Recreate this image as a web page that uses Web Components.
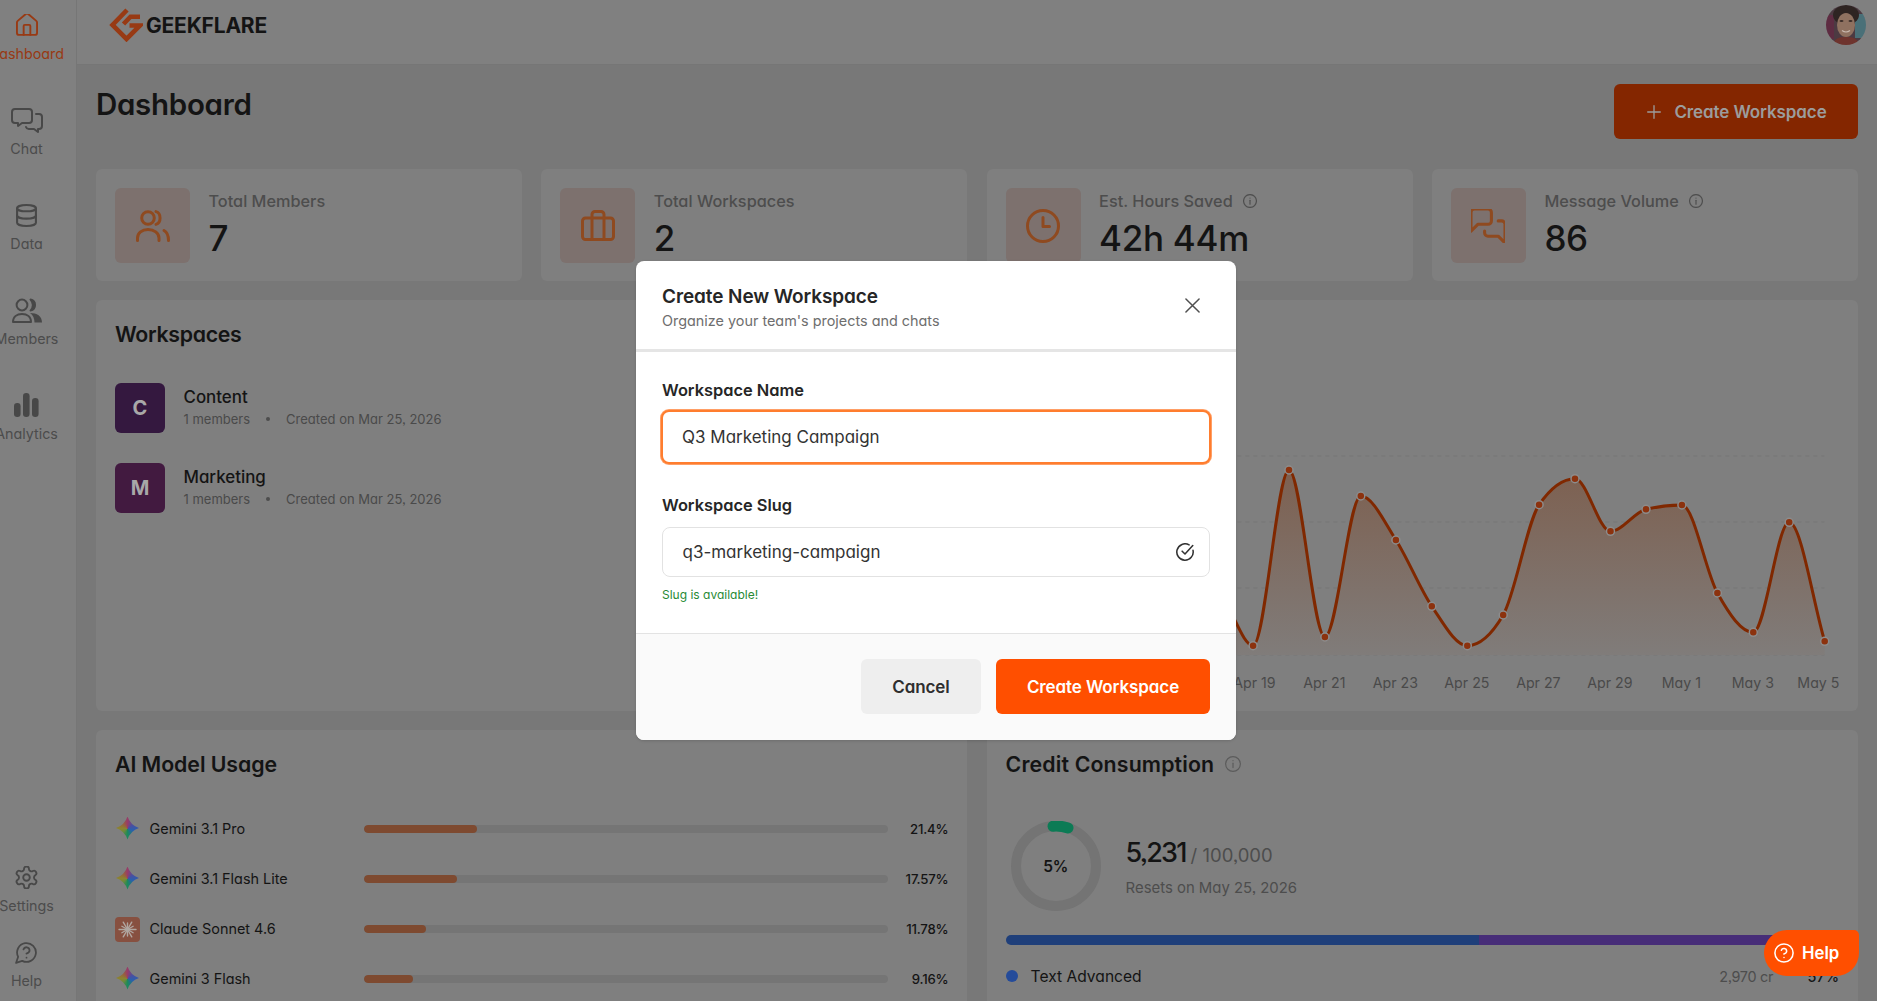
<!DOCTYPE html>
<html lang="en"><head><meta charset="utf-8"><title>Geekflare Dashboard</title>
<style>
html,body{margin:0;padding:0;height:1001px;overflow:hidden;background:#787878}
body{font-family:Inter,"Noto Sans",sans-serif;font-feature-settings:"cv11","ss03";color:#141414}
</style></head><body>
<gf-app></gf-app>
<script>
const ICONS={
home:['3 2.3 18 19.7','<path d="M15 21v-8a1 1 0 0 0-1-1h-4a1 1 0 0 0-1 1v8"/><path d="M3 10a2 2 0 0 1 .709-1.528l7-5.999a2 2 0 0 1 2.582 0l7 5.999A2 2 0 0 1 21 10v9a2 2 0 0 1-2 2H5a2 2 0 0 1-2-2z"/>'],
chat:['0 0 32 25','<path d="M4 1H18a3 3 0 0 1 3 3V12a3 3 0 0 1-3 3H11L7 18V15H4a3 3 0 0 1-3-3V4a3 3 0 0 1 3-3Z"/><path d="M25 6h3a3 3 0 0 1 3 3v9a3 3 0 0 1-3 3h-1v3l-4-3h-5a3 3 0 0 1-3-2"/>'],
data:['2 1 20 22','<ellipse cx="12" cy="5" rx="9" ry="3"/><path d="M3 5V19A9 3 0 0 0 21 19V5"/><path d="M3 12A9 3 0 0 0 21 12"/>'],
members:['0 0 32 25','<circle cx="11" cy="7" r="5.4"/><path d="M19.5 1.6A5.6 5.6 0 0 1 19.5 12.6A7.6 7.6 0 0 0 19.5 1.6Z" fill="currentColor"/><path d="M2 24C2 18.5 6 16 11 16C16 16 20 18.5 20 24Z"/><path d="M19 15C26 15 31 18 31 24.6H23.5C23.5 20.5 22 17 19 15Z" fill="currentColor" stroke="none"/>'],
bars:['0 0 25 24','<rect x="0" y="10" width="6.6" height="14" rx="3.2" fill="currentColor" stroke="none"/><rect x="9" y="0" width="6.6" height="24" rx="3.2" fill="currentColor" stroke="none"/><rect x="18" y="5" width="6.6" height="19" rx="3.2" fill="currentColor" stroke="none"/>'],
settings:['1.5 1.5 21 21','<path d="M12.22 2h-.44a2 2 0 0 0-2 2v.18a2 2 0 0 1-1 1.73l-.43.25a2 2 0 0 1-2 0l-.15-.08a2 2 0 0 0-2.73.73l-.22.38a2 2 0 0 0 .73 2.73l.15.1a2 2 0 0 1 1 1.72v.51a2 2 0 0 1-1 1.74l-.15.09a2 2 0 0 0-.73 2.73l.22.38a2 2 0 0 0 2.73.73l.15-.08a2 2 0 0 1 2 0l.43.25a2 2 0 0 1 1 1.73V20a2 2 0 0 0 2 2h.44a2 2 0 0 0 2-2v-.18a2 2 0 0 1 1-1.73l.43-.25a2 2 0 0 1 2 0l.15.08a2 2 0 0 0 2.73-.73l.22-.39a2 2 0 0 0-.73-2.73l-.15-.08a2 2 0 0 1-1-1.74v-.5a2 2 0 0 1 1-1.74l.15-.09a2 2 0 0 0 .73-2.73l-.22-.38a2 2 0 0 0-2.73-.73l-.15.08a2 2 0 0 1-2 0l-.43-.25a2 2 0 0 1-1-1.73V4a2 2 0 0 0-2-2z"/><circle cx="12" cy="12" r="3"/>'],
helpbubble:['1 1 22 22','<path d="M7.9 20A9 9 0 1 0 4 16.1L2 22Z"/><path d="M9.09 9a3 3 0 0 1 5.83 1c0 2-3 3-3 3"/><path d="M12 17h.01"/>'],
users:['0 0 34 32','<circle cx="12" cy="8" r="6.3"/><path d="M20 1.6C25.4 3 25.4 13 20 14.4"/><path d="M1.5 30.5V28C1.500 23 6 19.500 12 19.500C18 19.500 23 23 23 28V30.500"/><path d="M28 20.500C30.800 22 32.500 25 32.500 30.500"/>'],
brief:['0 0 34 31','<rect x="1.500" y="8" width="31" height="21.500" rx="3"/><path d="M11 8V29.500M23 8V29.500M11 8V4.500A3 3 0 0 1 14 1.500H20A3 3 0 0 1 23 4.500V8"/>'],
clock:['0 0 34 34','<circle cx="17" cy="17" r="15.500"/><path d="M17 8.500V17.500H23.500"/>'],
msgs:['2 2 20 20','<path d="M14 9a2 2 0 0 1-2 2H6l-4 4V4a2 2 0 0 1 2-2h8a2 2 0 0 1 2 2z"/><path d="M18 9h2a2 2 0 0 1 2 2v11l-4-4h-6a2 2 0 0 1-2-2v-1"/>'],
info:['2 2 20 20','<circle cx="12" cy="12" r="9.200"/><path d="M12 16.500v-5.500"/><path d="M12 7.800h.01"/>'],
plus:['0 0 16 16','<path d="M8 .8V15.200M.8 8H15.200"/>'],
close:['0 0 16 16','<path d="M1 1L15 15M15 1L1 15"/>'],
check:['1 1 22 22','<path d="M21.801 10A10 10 0 1 1 17 3.335"/><path d="m8.500 11 3.500 3.500L21.500 4"/>'],
qcircle:['1 1 22 22','<circle cx="12" cy="12" r="10"/><path d="M9.090 9a3 3 0 0 1 5.830 1c0 2-3 3-3 3"/><path d="M12 17h.01"/>']
};
class Base extends HTMLElement{
  constructor(){super();this.attachShadow({mode:'open'})}
  render(html){this.shadowRoot.innerHTML=html}
  a(n,d=''){return this.hasAttribute(n)?this.getAttribute(n):d}
}
customElements.define('gf-icon',class extends Base{connectedCallback(){
  const [vb,body]=ICONS[this.a('name')];const w=this.a('w','24'),h=this.a('h',w),sw=this.a('sw','2');
  this.render(`<style>:host{display:inline-flex;flex:none;line-height:0}svg{display:block}</style>
  <svg xmlns="http://www.w3.org/2000/svg" viewBox="${vb}" width="${w}" height="${h}" fill="none" stroke="currentColor" stroke-width="${sw}" stroke-linecap="round" stroke-linejoin="round">${body}</svg>`);
}});
customElements.define('gf-nav-item',class extends Base{connectedCallback(){
  const on=this.hasAttribute('active');
  this.render(`<style>:host{display:flex;flex-direction:column;align-items:center;height:53.500px;color:${on?'#983a14':'#484848'}}
  .i{height:30px;display:flex;align-items:center;justify-content:center}
  .l{margin-top:4.500px;font-size:14.300px;line-height:18px;white-space:nowrap;font-weight:400;color:${on?'#983a14':'#4c4c4c'}}</style>
  <div class="i"><slot name="icon"></slot></div><div class="l"><slot></slot></div>`);
}});
customElements.define('gf-sidebar',class extends Base{connectedCallback(){
  this.render(`<style>:host{display:flex;box-sizing:border-box;width:77px;height:1001px;background:#808080;border-right:1px solid #767676}
  nav{width:53px;height:100%;box-sizing:border-box;padding:10px 0 10.500px;display:flex;flex-direction:column;justify-content:space-between}
  .g{display:flex;flex-direction:column}.top{gap:41.500px}.bot{gap:21.500px}</style>
  <nav><div class="g top">
   <gf-nav-item active><gf-icon slot="icon" name="home" w="22" h="22" sw="1.700"></gf-icon>Dashboard</gf-nav-item>
   <gf-nav-item><gf-icon slot="icon" name="chat" w="32" h="25" sw="2"></gf-icon>Chat</gf-nav-item>
   <gf-nav-item><gf-icon slot="icon" name="data" w="21" h="23" sw="2"></gf-icon>Data</gf-nav-item>
   <gf-nav-item><gf-icon slot="icon" name="members" w="32" h="25" sw="2"></gf-icon>Members</gf-nav-item>
   <gf-nav-item><gf-icon slot="icon" name="bars" w="25" h="24"></gf-icon>Analytics</gf-nav-item>
  </div><div class="g bot">
   <gf-nav-item><gf-icon slot="icon" name="settings" w="23" h="23" sw="1.700"></gf-icon>Settings</gf-nav-item>
   <gf-nav-item><gf-icon slot="icon" name="helpbubble" w="23" h="23" sw="1.700"></gf-icon>Help</gf-nav-item>
  </div></nav>`);
}});
customElements.define('gf-topbar',class extends Base{connectedCallback(){
  this.render(`<style>:host{display:flex;flex:none;box-sizing:border-box;height:65px;background:#808080;border-bottom:1px solid #767676;padding:0 11px 14px 32px;align-items:center;justify-content:space-between}
  .logo{display:flex;align-items:center;gap:3px}
  .t{font-family:Inter,sans-serif;font-feature-settings:normal;font-weight:700;font-size:21px;letter-spacing:-.2px;color:#141414;line-height:24px;margin-top:2px}</style>
  <div class="logo"><svg width="34" height="34" viewBox="109 8 34 34" fill="none" stroke="#983a14" stroke-width="4.600"><path d="M127 10L112.500 25L126.500 39L140 25.500H129.500" stroke-linejoin="miter"/><path d="M123.500 24L130.500 16.700H140"/></svg><span class="t">GEEKFLARE</span></div>
  <svg width="40" height="40" viewBox="0 0 40 40"><defs><clipPath id="c"><circle cx="20" cy="20" r="20"/></clipPath></defs><g clip-path="url(#c)"><g style="filter:blur(.6px)"><rect width="40" height="40" fill="#4c3a42"/><rect x="29" y="9" width="11" height="24" fill="#4a7078"/><rect x="0" y="10" width="8" height="24" fill="#5e2c42"/><ellipse cx="20" cy="10" rx="13" ry="10" fill="#2e2422"/><ellipse cx="20" cy="20" rx="9" ry="12" fill="#8f7160"/><ellipse cx="15.500" cy="16" rx="2" ry="1" fill="#3c2e2a"/><ellipse cx="24.500" cy="16" rx="2" ry="1" fill="#3c2e2a"/><path d="M16 25.500q4 3 8 0" stroke="#c9b8ae" stroke-width="1.200" fill="none"/><path d="M6 40q3-9 14-8q11-1 14 8z" fill="#6e342e"/></g></g></svg>`);
}});
customElements.define('gf-stat',class extends Base{connectedCallback(){
  const info=this.hasAttribute('info')?`<gf-icon name="info" w="14" sw="1.700" style="color:#4f4f4f;margin-left:10px"></gf-icon>`:'';
  this.render(`<style>:host{display:flex;box-sizing:border-box;height:112px;background:#7f7f7f;border-radius:6px;padding:19px 19px 18px;gap:18.500px}
  .tile{width:75px;height:75px;border-radius:6px;background:#7d716e;display:flex;align-items:center;justify-content:center;color:#8f4a20;flex:none}
  .col{display:flex;flex-direction:column;margin-top:1px}
  .lab{display:flex;align-items:center;font-size:16.300px;line-height:24px;font-weight:500;color:#4d4d4d}
  .val{font-size:35px;line-height:38px;margin-top:6px;font-weight:500;color:#141414;letter-spacing:-.3px}</style>
  <div class="tile"><slot name="icon"></slot></div>
  <div class="col"><div class="lab">${this.a('label')}${info}</div><div class="val">${this.a('value')}</div></div>`);
}});
customElements.define('gf-card',class extends Base{connectedCallback(){
  const info=this.hasAttribute('info')?`<gf-icon name="info" w="16" sw="1.500" style="color:#5c5c5c;margin-left:11px"></gf-icon>`:'';
  const title=this.a('title');
  this.render(`<style>:host{display:flex;flex-direction:column;box-sizing:border-box;background:#7f7f7f;border-radius:6px;padding:20px 19px 0;overflow:hidden;position:relative}
  h2{margin:0;display:flex;align-items:center;font-size:21.300px;line-height:28px;font-weight:600;color:#141414;letter-spacing:${this.a('ls','-.2px')}}</style>
  ${title?`<h2>${title}${info}</h2>`:''}<slot></slot>`);
  this.removeAttribute('title');
}});
customElements.define('gf-workspace',class extends Base{connectedCallback(){
  this.render(`<style>:host{display:flex;align-items:center;gap:18.500px;height:50px}
  .av{width:50px;height:50px;border-radius:6px;background:${this.a('color')};color:#a8a8a8;font-size:20px;font-weight:700;display:flex;align-items:center;justify-content:center;flex:none}
  .tx{margin-top:-2px}
  .n{font-size:16.900px;line-height:24px;font-weight:500;color:#141414}
  .m{display:flex;align-items:center;font-size:13px;line-height:21px;color:#4a4a4a}
  .d{width:4px;height:4px;border-radius:50%;background:#4d4d4d;margin:0 16px}</style>
  <div class="av">${this.a('letter')}</div><div class="tx"><div class="n">${this.a('name')}</div><div class="m"><span>1 members</span><span class="d"></span><span>Created on Mar 25, 2026</span></div></div>`);
}});
customElements.define('gf-model',class extends Base{connectedCallback(){
  const claude=this.a('kind')==='claude';
  const rays=Array.from({length:12},(_,i)=>{const t=i*Math.PI/6,l=i%2?6.500:8.500;return `<path d="M12.500 12.500L${(12.500+l*Math.cos(t)).toFixed(2)} ${(12.500+l*Math.sin(t)).toFixed(2)}"/>`}).join('');
  const logo=claude?`<svg width="25" height="25" viewBox="0 0 25 25"><rect width="25" height="25" rx="4" fill="#875040"/><g stroke="#b0a6a0" stroke-width="1.400" stroke-linecap="round">${rays}</g></svg>`
   :`<span class="star"></span>`;
  this.render(`<style>:host{display:grid;grid-template-columns:249px 1fr 60px;align-items:center;height:50px}
  .nm{display:flex;align-items:center;gap:9.500px;font-size:14.400px;color:#141414;font-weight:400}
  .nm span:last-child{margin-top:-2px}
  .lg{width:25px;height:25px;margin-top:0!important;display:flex;align-items:center;justify-content:center;flex:none}
  .star{width:23px;height:23px;display:block;background:conic-gradient(from 0deg,#983c68,#4a4fa0 55deg,#2a5fae 110deg,#1c8a5c 180deg,#6f8a3a 235deg,#8a8430 270deg,#98603e 320deg,#983c68);clip-path:path('M11.500 0Q14.400 8.600 23 11.500Q14.400 14.400 11.500 23Q8.600 14.400 0 11.500Q8.600 8.600 11.500 0Z')}
  .tr{height:8px;border-radius:4px;background:#757575;overflow:hidden}.fl{height:100%;border-radius:4px;background:#7e4a30;width:${this.a('fill')}px}
  .p{text-align:right;font-size:13.200px;font-weight:500;color:#141414;letter-spacing:-.2px}</style>
  <div class="nm"><span class="lg">${logo}</span><span>${this.a('name')}</span></div><div class="tr"><div class="fl"></div></div><div class="p">${this.a('pct')}</div>`);
}});
customElements.define('gf-chart',class extends Base{connectedCallback(){
  const xs=[1004,1039.600,1075.200,1110.800,1146.400,1182,1217,1252.700,1288.600,1324.500,1360.400,1395.500,1431.400,1466.900,1502.800,1538.700,1574.600,1610.100,1645.600,1681.500,1717,1752.900,1788.800,1824.300];
  const ys=[640,600,560,620,580,630,596,645.700,470,637,496,540,606.300,645.700,615,504.700,478.700,531.300,509.300,505,593,632.300,522.300,641.300];
  const n=xs.length,d=[],m=[];
  for(let i=0;i<n-1;i++)d[i]=(ys[i+1]-ys[i])/(xs[i+1]-xs[i]);
  m[0]=d[0];m[n-1]=d[n-2];
  for(let i=1;i<n-1;i++){m[i]=0;if(d[i-1]*d[i]>0){const h0=xs[i]-xs[i-1],h1=xs[i+1]-xs[i];const p=(d[i-1]*h1+d[i]*h0)/(h0+h1);m[i]=(Math.sign(d[i-1])+Math.sign(d[i]))*Math.min(Math.abs(d[i-1]),Math.abs(d[i]),.5*Math.abs(p))}}
  let p=`M${xs[0]} ${ys[0]}`;
  for(let i=0;i<n-1;i++){const h=(xs[i+1]-xs[i])/3;p+=`C${xs[i]+h} ${ys[i]+m[i]*h} ${xs[i+1]-h} ${ys[i+1]-m[i+1]*h} ${xs[i+1]} ${ys[i+1]}`}
  const labels=[['Apr 19',1254],['Apr 21',1324],['Apr 23',1395],['Apr 25',1466.500],['Apr 27',1538],['Apr 29',1609.500],['May 1',1681],['May 3',1752.500],['May 5',1818]];
  this.render(`<style>:host{display:block;position:absolute;inset:0}svg{display:block}text{font-family:Inter,sans-serif;font-feature-settings:"cv11";font-size:14.200px;fill:#4a4a4a;text-anchor:middle}</style>
  <svg width="871.400" height="411" viewBox="986.600 300 871.400 411">
  <defs><linearGradient id="g" x1="0" y1="470" x2="0" y2="655" gradientUnits="userSpaceOnUse"><stop offset="0" stop-color="#7d6050"/><stop offset="1" stop-color="#807c7a"/></linearGradient></defs>
  ${[456,522,588,655].map(y=>`<path d="M1005 ${y}H1824" stroke="#767676" stroke-dasharray="4 4" fill="none"/>`).join('')}
  <path d="${p}L1824.300 655L1004 655Z" fill="url(#g)"/>
  <path d="${p}" fill="none" stroke="#802800" stroke-width="3"/>
  ${xs.map((x,i)=>`<circle cx="${x}" cy="${ys[i]}" r="4" fill="#8c320e" stroke="#8c8c8c" stroke-width="1.500"/>`).join('')}
  ${labels.map(([t,x])=>`<text x="${x}" y="688">${t}</text>`).join('')}
  </svg>`);
}});
customElements.define('gf-credit',class extends Base{connectedCallback(){
  this.render(`<style>:host{display:block}
  .top{display:flex;align-items:center;gap:25px;margin-top:43px;padding-left:5px}
  .dn{position:relative;width:90px;height:90px;flex:none}
  .dn b{position:absolute;inset:0;display:flex;align-items:center;justify-content:center;font-size:15.500px;font-weight:600;color:#141414;letter-spacing:-.2px}
  .tc{margin-top:3px}
  .big{display:flex;align-items:baseline;gap:5px;color:#141414}
  .big b{font-size:27px;font-weight:500;letter-spacing:-1.800px;line-height:34px}
  .big span{font-size:18.500px;color:#4d4d4d}
  .r{font-size:14.900px;color:#4d4d4d;margin-top:7px;line-height:22px}
  .bar{display:flex;height:10px;border-radius:5px;overflow:hidden;margin-top:24px;margin-right:1px}
  .leg{display:flex;align-items:center;height:20px;margin-top:21px;font-size:15.600px}
  .dot{width:12px;height:12px;border-radius:50%;background:#244b9a;margin-right:13px;flex:none}
  .cr{margin-left:auto;font-size:14.400px;color:#4d4d4d;letter-spacing:-.3px}.pc{width:66px;font-size:14.400px;text-align:right;font-weight:500}</style>
  <div class="top"><div class="dn"><svg width="90" height="90" viewBox="0 0 90 90" fill="none"><circle cx="45" cy="45" r="40" stroke="#747474" stroke-width="10"/><path d="M42 5.200A40 40 0 0 1 57 6.900" stroke="#0c7b55" stroke-width="11" stroke-linecap="round"/></svg><b>5%</b></div>
  <div class="tc"><div class="big"><b>5,231</b><span>/ 100,000</span></div><div class="r">Resets on May 25, 2026</div></div></div>
  <div class="bar"><span style="width:473px;background:#1f3f7a"></span><span style="flex:1;background:#472d78"></span></div>
  <div class="leg"><span class="dot"></span><span>Text Advanced</span><span class="cr">2,970 cr</span><span class="pc">57%</span></div>`);
}});
customElements.define('gf-field',class extends Base{connectedCallback(){
  const f=this.hasAttribute('focused');
  this.render(`<style>:host{display:block}
  label{display:block;font-size:16.400px;line-height:20px;font-weight:600;color:#262626}
  .box{box-sizing:border-box;display:flex;align-items:center;justify-content:space-between;background:#fff;border-radius:8px;padding:0 ${f?'20px':'15.500px'} 0 ${f?'19px':'19.500px'};
   ${f?'height:54px;margin:10px -1px 0;border:2px solid #ff7d2e;box-shadow:0 0 0 1px #ff9f66':'height:50px;margin:12px 0 0;border:1px solid #e2e2e2'};
   font-size:17px;color:#333}
  .box gf-icon{color:#2b2b2b}</style>
  <label>${this.a('label')}</label><div class="box"><span>${this.a('value')}</span><slot></slot></div>`);
}});
customElements.define('gf-button',class extends Base{connectedCallback(){
  const k=this.a('kind','primary');
  const st={primary:'background:#ff4f00;color:#fff;width:214px;height:55px',dim:'background:#842600;color:#9c9c9c;width:244px;height:55px;padding-left:2px;box-sizing:border-box',ghost:'background:#eee;color:#2e2e2e;width:120px;height:55px'}[k];
  this.render(`<style>:host{display:inline-flex;flex:none;align-items:center;justify-content:center;gap:13px;border-radius:6px;font-size:17px;font-weight:600;letter-spacing:-.1px;white-space:nowrap;${st}}</style><slot></slot>`);
}});
customElements.define('gf-modal',class extends Base{connectedCallback(){
  this.render(`<style>:host{position:absolute;inset:0;display:flex;align-items:center;justify-content:center;padding-right:5px;box-sizing:border-box}
  .m{width:600px;height:479px;background:#fff;border-radius:8px;overflow:hidden;display:flex;flex-direction:column;box-shadow:0 1px 3px rgba(0,0,0,.15)}
  .h{box-sizing:border-box;height:91px;flex:none;border-bottom:3px solid #e5e5e5;padding:22.500px 36px 0 26px;display:flex;justify-content:space-between}
  .ti{font-size:19px;font-weight:600;line-height:26px;color:#262626;letter-spacing:-.1px}
  .su{font-size:14.400px;line-height:21px;color:#6e6e6e}
  .x{color:#4f4f4f;margin-top:14.500px}
  .b{flex:1;box-sizing:border-box;padding:28px 26px 0;display:flex;flex-direction:column}
  .hint{font-size:12px;line-height:16px;color:#278a34;margin-top:10px}
  .f{height:107px;flex:none;box-sizing:border-box;border-top:1px solid #e3e3e3;background:#fafafa;padding:25px 26px 0;display:flex;justify-content:flex-end;gap:15px}</style>
  <div class="m" role="dialog"><div class="h"><div><div class="ti">Create New Workspace</div><div class="su">Organize your team's projects and chats</div></div><gf-icon class="x" name="close" w="15" sw="1.600"></gf-icon></div>
  <div class="b"><gf-field focused label="Workspace Name" value="Q3 Marketing Campaign"></gf-field>
  <gf-field style="margin-top:31px" label="Workspace Slug" value="q3-marketing-campaign"><gf-icon name="check" w="18" sw="1.900"></gf-icon></gf-field>
  <div class="hint">Slug is available!</div></div>
  <div class="f"><gf-button kind="ghost">Cancel</gf-button><gf-button>Create Workspace</gf-button></div></div>`);
}});
customElements.define('gf-help',class extends Base{connectedCallback(){
  this.render(`<style>:host{position:absolute;left:1764px;top:930px;width:95px;height:46px;background:#ff4f00;border-radius:23px 5px 23px 23px;color:#fff;display:flex;align-items:center;gap:8px;padding-left:10px;box-sizing:border-box;font-size:16.800px;font-weight:600}</style>
  <gf-icon name="qcircle" w="20" sw="1.700"></gf-icon><span>Help</span>`);
}});
customElements.define('gf-app',class extends Base{connectedCallback(){
  this.render(`<style>:host{display:flex;position:relative;width:1877px;height:1001px;overflow:hidden;background:#787878}
  .r{flex:1;min-width:0;display:flex;flex-direction:column}
  main{flex:1;min-height:0;box-sizing:border-box;padding:19px 19px 0 19px;display:flex;flex-direction:column}
  main>*{flex:none}
  .hd{display:flex;justify-content:space-between;height:55px;margin-bottom:30px}
  h1{margin:0;font-size:29.500px;line-height:40px;font-weight:600;color:#141414;letter-spacing:-.3px}
  .st{display:grid;grid-template-columns:repeat(4,1fr);gap:19.200px}
  .two{display:grid;grid-template-columns:repeat(2,1fr);gap:19.200px;margin-top:19px}
  .ws{height:411px}.list{display:flex;flex-direction:column;gap:30px;margin-top:35px}
  .mo{margin-top:26px}.lo{height:400px}
  </style>
  <gf-sidebar></gf-sidebar>
  <div class="r"><gf-topbar></gf-topbar><main>
   <div class="hd"><h1>Dashboard</h1><gf-button kind="dim"><gf-icon name="plus" w="14" sw="1.500"></gf-icon>Create Workspace</gf-button></div>
   <div class="st">
    <gf-stat label="Total Members" value="7"><gf-icon slot="icon" name="users" w="34" h="32" sw="3"></gf-icon></gf-stat>
    <gf-stat label="Total Workspaces" value="2"><gf-icon slot="icon" name="brief" w="34" h="31" sw="3"></gf-icon></gf-stat>
    <gf-stat label="Est. Hours Saved" value="42h 44m" info><gf-icon slot="icon" name="clock" w="34" sw="3"></gf-icon></gf-stat>
    <gf-stat label="Message Volume" value="86" info><gf-icon slot="icon" name="msgs" w="34" sw="1.800"></gf-icon></gf-stat>
   </div>
   <div class="two ws">
    <gf-card title="Workspaces" ls="-.3px"><div class="list">
      <gf-workspace color="#34183f" letter="C" name="Content"></gf-workspace>
      <gf-workspace color="#421a40" letter="M" name="Marketing"></gf-workspace></div></gf-card>
    <gf-card><gf-chart></gf-chart></gf-card>
   </div>
   <div class="two lo">
    <gf-card title="AI Model Usage" ls="-.05px"><div class="mo">
      <gf-model name="Gemini 3.1 Pro" pct="21.4%" fill="113"></gf-model>
      <gf-model name="Gemini 3.1 Flash Lite" pct="17.57%" fill="93"></gf-model>
      <gf-model kind="claude" name="Claude Sonnet 4.6" pct="11.78%" fill="62"></gf-model>
      <gf-model name="Gemini 3 Flash" pct="9.16%" fill="49"></gf-model></div></gf-card>
    <gf-card title="Credit Consumption" info ls=".15px"><gf-credit></gf-credit></gf-card>
   </div>
  </main></div>
  <gf-help></gf-help>
  <gf-modal></gf-modal>`);
}});
</script>
</body></html>
